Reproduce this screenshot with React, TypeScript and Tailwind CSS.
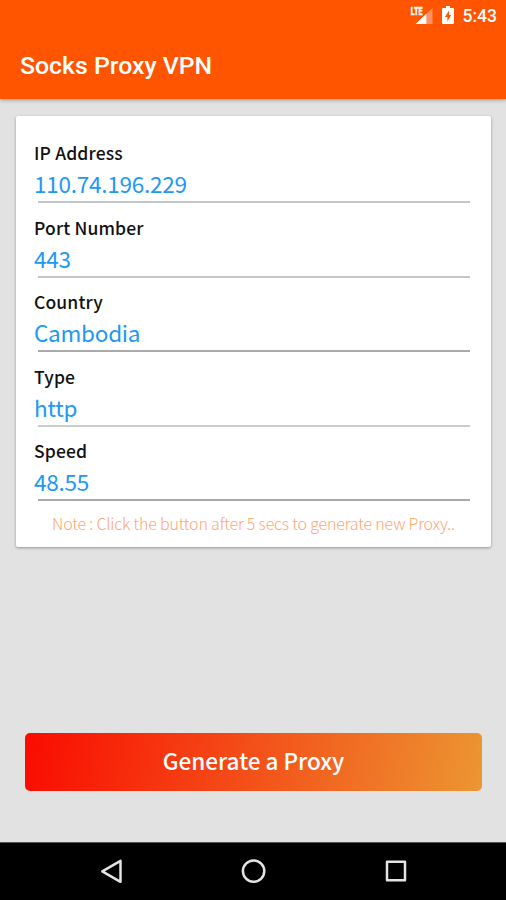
const fields = [
  { label: "IP Address", value: "110.74.196.229", line: "bg-[#c3c6c8]" },
  { label: "Port Number", value: "443", line: "bg-[#c3c6c8]" },
  { label: "Country", value: "Cambodia", line: "bg-[#a9a9a9]" },
  { label: "Type", value: "http", line: "bg-[#cccccc]" },
  { label: "Speed", value: "48.55", line: "bg-[#a9a9a9]" },
];

function StatusBar() {
  return (
    <div className="flex h-8 items-center justify-end pr-[9px] text-white">
      <svg width="24" height="20" viewBox="0 0 24 20" className="mr-[8px]">
        <path d="M22.5 2V18H16.5V8Z" fill="#ff9264" />
        <path d="M16.5 7.5V18H5.5Z" fill="#fff" />
        <text x="0.8" y="8.6" fontSize="10" fontWeight="900" fontFamily="Roboto, sans-serif" fill="#fff" stroke="#fff" strokeWidth="0.3" textLength="11.7" lengthAdjust="spacingAndGlyphs">LTE</text>
      </svg>
      <svg width="12" height="18" viewBox="0 0 12 18" className="mr-[9px] -mt-[2px]">
        <path d="M4 0H8V2H11Q12 2 12 3V17Q12 18 11 18H1Q0 18 0 17V3Q0 2 1 2H4Z" fill="#fff" />
        <path d="M7 4.5L3 11H5.4V15.5L9.2 9H7Z" fill="#ff5400" />
      </svg>
      <span className="text-[17.5px] leading-8 font-medium">5:43</span>
    </div>
  );
}

function Field({ label, value, line }: (typeof fields)[number]) {
  return (
    <div className="flex h-[74.6px] flex-col">
      <div className="h-[30px] text-[17.5px] leading-[30px] font-medium tracking-[0.15px] text-[#111]">{label}</div>
      <div className="h-[33px] text-[22.5px] leading-[31px] tracking-[-0.25px] text-[#2098f5]">{value}</div>
      <div className={`mr-[3px] ml-1 h-[2px] shrink-0 ${line}`} />
    </div>
  );
}

function NavBar() {
  return (
    <nav className="flex h-[58px] items-center border-t border-[#555] bg-black">
      <svg width="506" height="57" viewBox="0 0 506 57" fill="none" stroke="#e4e4e4" strokeWidth="2.5" strokeLinejoin="round">
        <path d="M120.5 17.8V38.8L102.3 28.3Z" />
        <circle cx="253.6" cy="28.1" r="10.7" />
        <rect x="387" y="18.7" width="18" height="18.5" />
      </svg>
    </nav>
  );
}

export default function App() {
  return (
    <div className="flex h-[900px] w-[506px] flex-col overflow-hidden bg-[#e2e2e2] font-['Roboto',sans-serif]">
      <header className="h-[99px] shrink-0 bg-[#ff5400] shadow-[0_1px_4px_rgba(0,0,0,0.35)]">
        <StatusBar />
        <h1 className="pl-5 text-[24.8px] leading-[67px] font-medium text-white">Socks Proxy VPN</h1>
      </header>

      <main className="flex flex-1 flex-col font-['Noto_Sans_CJK_SC',sans-serif]">
        <section className="mt-[17px] mr-[15px] ml-4 h-[431px] rounded-[2px] bg-white pt-[22px] pr-[18px] pl-[18px] shadow-[0_1px_3px_rgba(0,0,0,0.35)]">
          {fields.map((field) => (
            <Field key={field.label} {...field} />
          ))}
          <p className="-mt-px ml-[18px] text-[16px] leading-[26px] font-light tracking-[-0.18px] whitespace-nowrap text-[#ffa570]">
            Note : Click the button after 5 secs to generate new Proxy..
          </p>
        </section>

        <button className="mt-[186px] mr-6 ml-[25px] h-[58px] rounded-[5px] bg-[linear-gradient(100deg,#fa0b00,#ec9632)] pb-[3px] text-[22.5px] leading-[55px] font-medium text-white">
          Generate a Proxy
        </button>
      </main>

      <NavBar />
    </div>
  );
}
